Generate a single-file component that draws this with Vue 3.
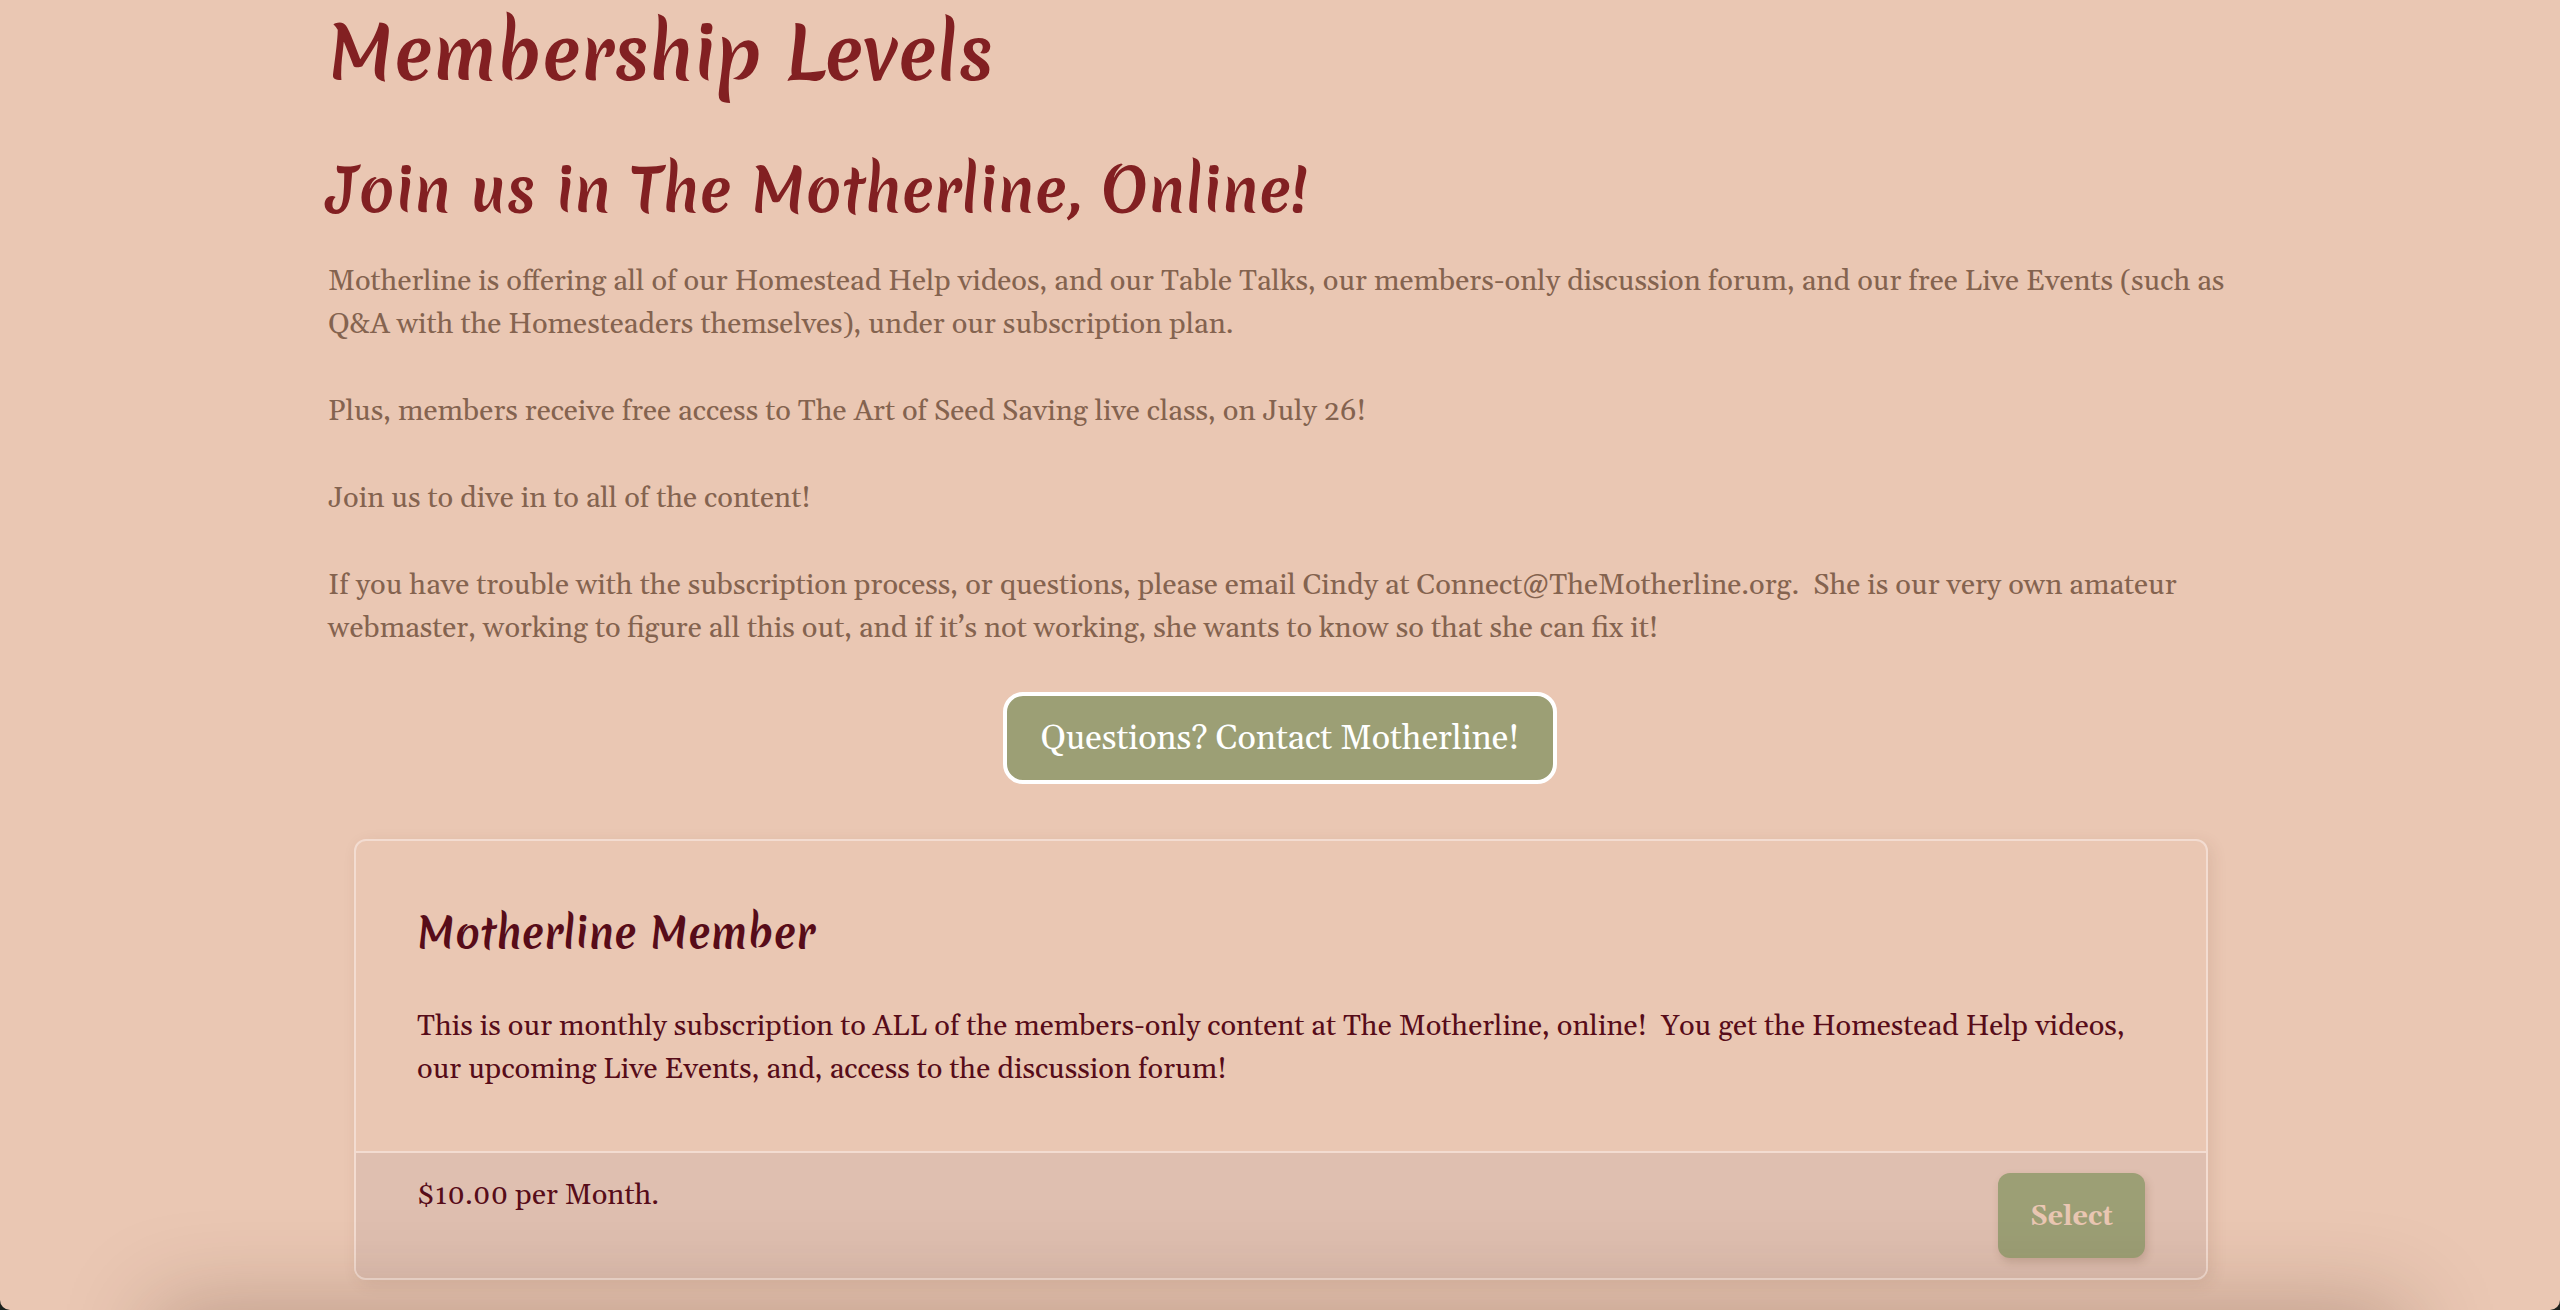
<script setup>
const paragraphs = [
  'Motherline is offering all of our Homestead Help videos, and our Table Talks, our members-only discussion forum, and our free Live Events (such as Q&A with the Homesteaders themselves), under our subscription plan.',
  'Plus, members receive free access to The Art of Seed Saving live class, on July 26!',
  'Join us to dive in to all of the content!',
  'If you have trouble with the subscription process, or questions, please email Cindy at Connect@TheMotherline.org.\u00a0 She is our very own amateur webmaster, working to figure all this out, and if it’s not working, she wants to know so that she can fix it!',
]
const level = {
  name: 'Motherline Member',
  description:
    'This is our monthly subscription to ALL of the members-only content at The Motherline, online!\u00a0 You get the Homestead Help videos, our upcoming Live Events, and, access to the discussion forum!',
  price: '$10.00 per Month.',
}
</script>

<template>
  <div class="backdrop">
    <div class="page">
      <main class="content">
        <h1>Membership Levels</h1>
        <h2>Join us in The Motherline, Online!</h2>
        <div class="intro">
          <p v-for="text in paragraphs" :key="text">{{ text }}</p>
        </div>
        <a class="contact" href="#contact">Questions? Contact Motherline!</a>
        <section class="card">
          <div class="card-body">
            <h3>{{ level.name }}</h3>
            <p>{{ level.description }}</p>
          </div>
          <div class="card-footer">
            <p>{{ level.price }}</p>
            <button type="button" class="select">Select</button>
          </div>
        </section>
      </main>
      <div class="shade" aria-hidden="true"></div>
    </div>
  </div>
</template>

<style>
body {
  margin: 0;
}
</style>

<style scoped>
.backdrop {
  background: #1c211d;
}
.page {
  position: relative;
  box-sizing: border-box;
  min-height: 100vh;
  overflow: hidden;
  padding-bottom: 24px;
  border-radius: 0 0 10px 10px;
  background: #eac7b3;
  font-family: Georgia, Gelasio, "Liberation Serif", serif;
  font-size: 29px;
  line-height: 43px;
}
.content {
  display: flex;
  flex-direction: column;
  box-sizing: border-box;
  max-width: 1952px;
  margin: 0 auto;
  padding: 0 24px;
}
h1,
h2,
h3,
p {
  margin: 0;
}
h1,
h2,
h3 {
  font-family: Merienda, Lato, sans-serif;
  font-weight: 700;
}
h1 {
  font-size: 71px;
  line-height: 106px;
  color: #822022;
}
h2 {
  margin-top: 40px;
  font-size: 59px;
  line-height: 88px;
  color: #822022;
}
.intro {
  display: flex;
  flex-direction: column;
  gap: 44px;
  margin: 26px -12px 0 0;
  color: #84634f;
}
.contact {
  align-self: center;
  margin-top: 42px;
  padding: 21px 34px 19px;
  border: 4px solid #fff;
  border-radius: 20px;
  background: #9c9f75;
  color: #fff;
  font-size: 34px;
  line-height: 44px;
  text-decoration: none;
}
.card {
  margin: 55px 24px 0 26px;
  overflow: hidden;
  border: 2px solid #f3dcd1;
  border-radius: 12px;
  box-shadow: 4px 4px 16px rgb(90 50 30 / 10%);
  color: #570c19;
}
.card-body {
  padding: 60px 61px;
}
h3 {
  margin-bottom: 40px;
  font-size: 41px;
  line-height: 64px;
}
.card-footer {
  display: flex;
  align-items: flex-start;
  justify-content: space-between;
  padding: 20px 61px;
  border-top: 2px solid #f3dcd1;
  background: #dfbfb0;
}
.card-footer p {
  line-height: 46px;
}
.select {
  padding: 21px 32px 18px;
  border: 0;
  border-radius: 12px;
  background: #9c9f75;
  box-shadow: 2px 4px 8px rgb(90 50 30 / 18%);
  color: #eac7b3;
  font-family: inherit;
  font-size: 27px;
  font-weight: 700;
  line-height: 46px;
}
.shade {
  position: absolute;
  right: 160px;
  bottom: -120px;
  left: 160px;
  height: 120px;
  box-shadow: 0 0 90px 6px rgb(60 30 20 / 26%);
  pointer-events: none;
}
</style>
